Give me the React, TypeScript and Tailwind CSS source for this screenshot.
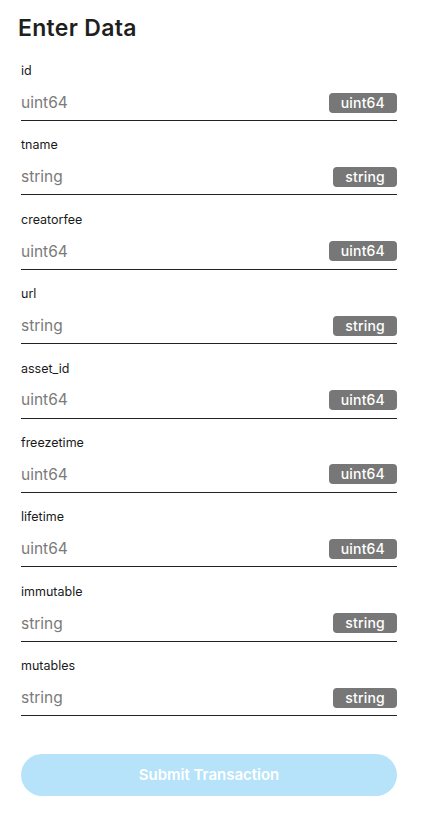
import React from "react";

const fields: [string, string][] = [
  ["id", "uint64"],
  ["tname", "string"],
  ["creatorfee", "uint64"],
  ["url", "string"],
  ["asset_id", "uint64"],
  ["freezetime", "uint64"],
  ["lifetime", "uint64"],
  ["immutable", "string"],
  ["mutables", "string"],
];

export default function App() {
  return (
    <div
      className="w-[438px] h-[829px] bg-white"
      style={{ fontFamily: "Inter, 'Noto Sans', sans-serif" }}
    >
      <div className="pl-[21px] w-[397px] pt-[14px]">
        <h1 className="ml-[-3px] h-[28px] leading-[28px] text-[23px] font-semibold text-[#1f1f1f] tracking-[0.3px]">
          Enter Data
        </h1>
        <div className="mt-[20px] flex flex-col gap-[15.375px]">
          {fields.map(([name, type]) => (
            <div key={name} className="flex flex-col">
              <label className="h-[18px] leading-[18px] text-[12.5px] text-[#1a1a1a]">
                {name}
              </label>
              <div className="mt-[3px] h-[38px] pt-[2px] flex items-center justify-between border-b border-[#222]">
                <span className="text-[15.5px] text-[#7a7a7a]">{type}</span>
                <span className="h-[20px] px-[12px] rounded-[4px] bg-[#777777] text-white text-[14px] font-medium leading-[20px] tracking-[0.2px]">
                  {type}
                </span>
              </div>
            </div>
          ))}
        </div>
        <button className="mt-[38px] w-full h-[42px] rounded-full bg-[#b6e3fa] text-white text-[15px] font-semibold">
          Submit Transaction
        </button>
      </div>
    </div>
  );
}
